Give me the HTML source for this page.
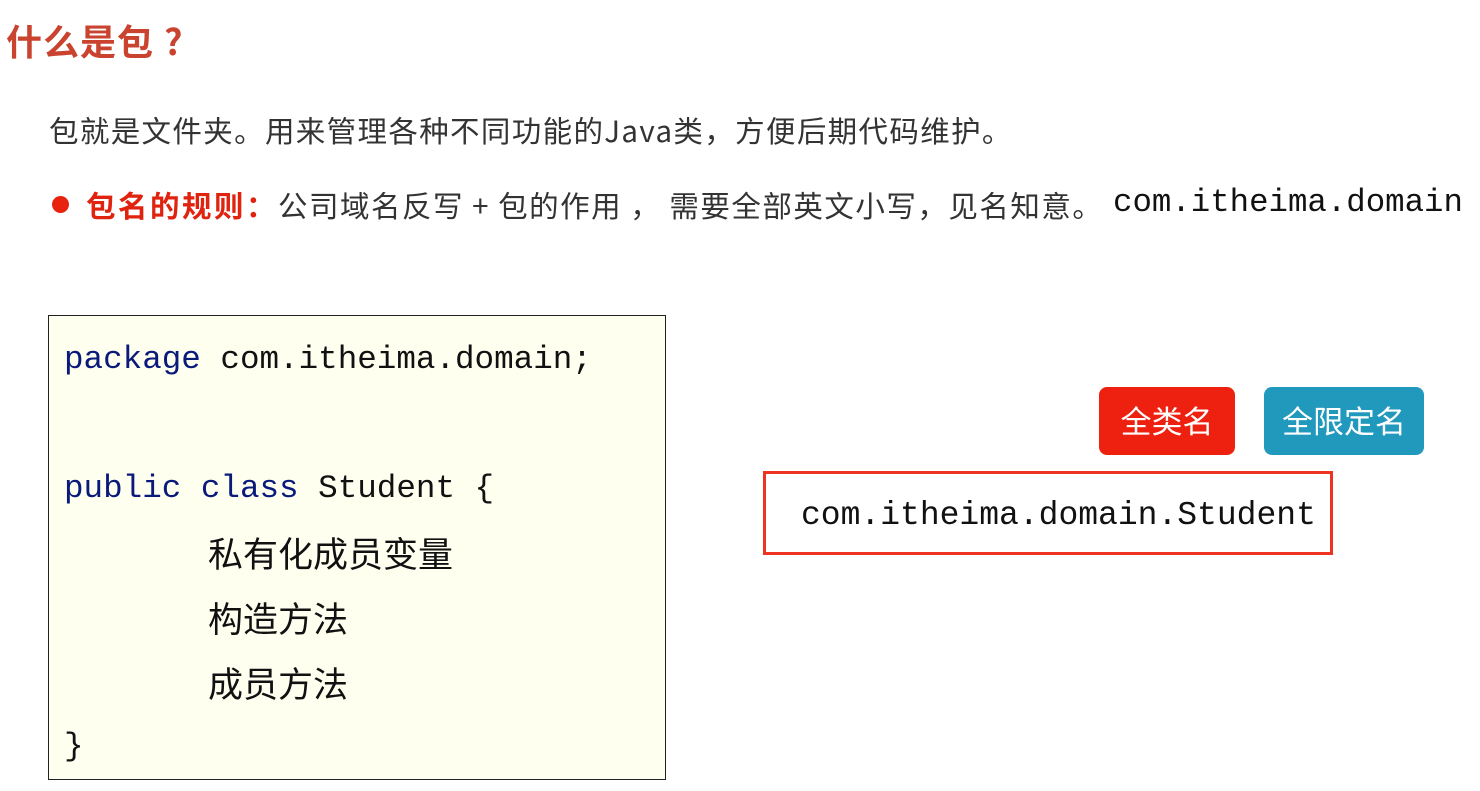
<!DOCTYPE html>
<html><head><meta charset="utf-8"><style>
body{margin:0;width:1480px;height:791px;background:#fff;position:relative;overflow:hidden;font-family:"Liberation Sans","Noto Sans CJK SC",sans-serif}
.a{position:absolute;white-space:nowrap}
.mono{font-family:"Liberation Mono","Noto Sans CJK SC",monospace}
</style></head><body>
<div class="a" style="left:6px;top:14px;font-size:36px;font-weight:bold;color:#c9432f;font-family:'Noto Sans CJK SC',sans-serif;letter-spacing:1px">什么是包<span style="margin-left:10px">?</span></div>
<div class="a" style="left:49px;top:110px;font-size:29.5px;color:#333;font-family:'Noto Sans CJK SC',sans-serif;line-height:40px;letter-spacing:1.35px">包就是文件夹。用来管理各种不同功能的Java类，方便后期代码维护。</div>
<div class="a" style="left:52px;top:196px;width:17px;height:17px;border-radius:50%;background:#e8220f;"></div>
<div class="a" style="left:86px;top:185px;font-size:29.5px;color:#333;font-family:'Noto Sans CJK SC',sans-serif;line-height:40px;letter-spacing:1.5px"><b style="color:#e0230f;letter-spacing:2.5px">包名的规则：</b>公司域名反写 + 包的作用 ， 需要全部英文小写，见名知意。</div>
<div class="a mono" style="left:1113px;top:184px;font-size:32.4px;color:#111;">com.itheima.domain</div>
<div class="a" style="left:48px;top:315px;width:616px;height:463px;border:1.5px solid #222;background:#fffff0;"></div>
<div class="a mono" style="left:64px;top:340px;font-size:32.6px;color:#111;line-height:40px">
<span style="color:#0a1a7a">package</span> com.itheima.domain;</div>
<div class="a mono" style="left:64px;top:469px;font-size:32.6px;color:#111;line-height:40px"><span style="color:#0a1a7a">public class</span> Student {</div>
<div class="a" style="left:208px;top:532px;font-size:35px;color:#111;line-height:42px;font-family:'Noto Sans CJK SC',sans-serif">私有化成员变量</div>
<div class="a" style="left:208px;top:597px;font-size:35px;color:#111;line-height:42px;font-family:'Noto Sans CJK SC',sans-serif">构造方法</div>
<div class="a" style="left:208px;top:662px;font-size:35px;color:#111;line-height:42px;font-family:'Noto Sans CJK SC',sans-serif">成员方法</div>
<div class="a mono" style="left:64px;top:727px;font-size:32.6px;color:#111;line-height:40px">}</div>
<div class="a" style="left:1099px;top:387px;width:136px;height:68px;border-radius:8px;background:#ee2010;color:#fff;font-size:31px;text-align:center;line-height:66px;font-family:'Noto Sans CJK SC',sans-serif">全类名</div>
<div class="a" style="left:1264px;top:387px;width:160px;height:68px;border-radius:8px;background:#2199bd;color:#fff;font-size:31px;text-align:center;line-height:66px;font-family:'Noto Sans CJK SC',sans-serif">全限定名</div>
<div class="a" style="left:763px;top:471px;width:564px;height:78px;border:3px solid #ee3322;"></div>
<div class="a mono" style="left:801px;top:496px;font-size:33px;color:#111;line-height:40px">com.itheima.domain.Student</div>
</body></html>
